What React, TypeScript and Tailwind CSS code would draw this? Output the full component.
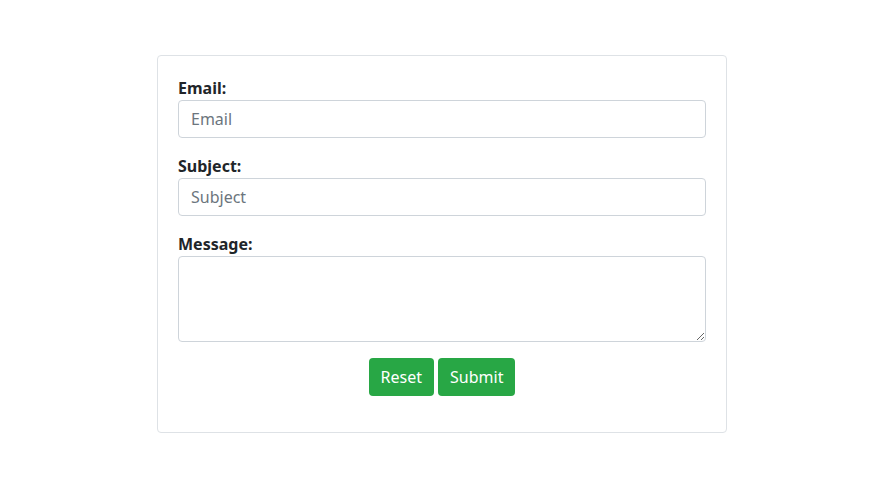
import React from 'react';

const inputClass =
  'block w-full h-[38px] rounded-[4px] border border-[#ced4da] bg-white px-3 text-base text-[#495057] placeholder:text-[#6c757d] outline-none';

export default function App() {
  return (
    <div
      className="min-h-screen bg-white pt-[55px] text-[#212529]"
      style={{ fontFamily: '"Segoe UI", "Noto Sans", sans-serif' }}
    >
      <form className="mx-auto ml-[157px] w-[570px] rounded-[4px] border border-[#dee2e6] px-5 pt-5 pb-9">
        <div className="mb-4">
          <label className="block text-base font-bold leading-6">Email:</label>
          <input type="email" placeholder="Email" className={inputClass} />
        </div>
        <div className="mb-4">
          <label className="block text-base font-bold leading-6">Subject:</label>
          <input type="text" placeholder="Subject" className={inputClass} />
        </div>
        <div className="mb-4">
          <label className="block text-base font-bold leading-6">Message:</label>
          <textarea className="block h-[86px] w-full rounded-[4px] border border-[#ced4da] bg-white px-3 py-1.5 text-base outline-none" />
        </div>
        <div className="flex justify-center gap-1">
          <button type="reset" className="h-[38px] rounded-[4px] bg-[#28a745] px-3 text-base text-white">
            Reset
          </button>
          <button type="submit" className="h-[38px] rounded-[4px] bg-[#28a745] px-3 text-base text-white">
            Submit
          </button>
        </div>
      </form>
    </div>
  );
}
